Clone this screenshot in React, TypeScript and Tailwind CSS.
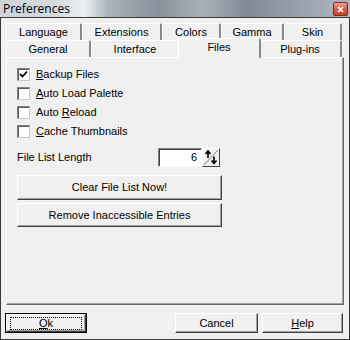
import React from "react";

const font = "font-['Liberation_Sans',Arial,sans-serif]";

const Tab = ({ label, w }: { label: string; w: string }) => (
  <div
    className={`${w} h-[17px] flex items-center justify-center border-t border-l border-white border-r-2 border-r-[#8a8a8a] rounded-tl-[2px] rounded-tr-[2px] bg-[#f0f0f0] text-black`}
  >
    {label}
  </div>
);

const Check = ({ checked }: { checked?: boolean }) => (
  <div className="w-[13px] h-[13px] bg-white border border-t-[#808080] border-l-[#808080] border-r-[#c8c8c8] border-b-[#c8c8c8] shadow-[inset_1px_1px_0_#5a5a5a] flex items-center justify-center">
    {checked && (
      <svg width="9" height="9" viewBox="0 0 9 9">
        <path d="M1 4 L3.5 6.5 L8 1.5" fill="none" stroke="#000" strokeWidth="1.8" />
      </svg>
    )}
  </div>
);

const Btn = ({ children, className = "" }: { children: React.ReactNode; className?: string }) => (
  <div
    className={`flex items-center justify-center bg-[#f0f0f0] border border-t-white border-l-white border-r-[#404040] border-b-[#404040] shadow-[inset_-1px_-1px_0_#a0a0a0] text-black ${className}`}
  >
    {children}
  </div>
);

const Row = ({ checked, children }: { checked?: boolean; children: React.ReactNode }) => (
  <div className="h-[19px] flex items-center gap-[6px]">
    <Check checked={checked} />
    <span>{children}</span>
  </div>
);

export default function App() {
  return (
    <div className={`w-[350px] h-[340px] flex flex-col bg-[#f0f0f0] text-[11px] ${font}`}>
      {/* title bar */}
      <div className="h-[17px] flex items-center justify-between pl-[3px] pr-[2px] bg-[linear-gradient(90deg,#cdd3d8_0%,#d6dce0_17%,#eef1f3_24%,#aab3bb_31%,#87919b_45%,#a9b2ba_58%,#7f8a95_70%,#96a1ab_85%,#aeb8c2_100%)]">
        <span className="text-[12px] text-black font-['Open_Sans',Arial,sans-serif] leading-none">Preferences</span>
        <div className="w-[15px] h-[14px] mt-[1px] rounded-[2px] border border-[#7a2b1e] bg-[linear-gradient(180deg,#f0a090_0%,#d9634c_45%,#c2412b_100%)] flex items-center justify-center">
          <svg width="7" height="7" viewBox="0 0 7 7">
            <path d="M1 1 L6 6 M6 1 L1 6" stroke="#fff" strokeWidth="1.7" />
          </svg>
        </div>
      </div>

      {/* body */}
      <div className="flex-1 flex flex-col border border-[#3a3a3a] pl-[5px] pr-[4px] pt-[5px]">
        {/* tabs */}
        <div className="w-[336px]">
          <div className="flex h-[17px]">
            <Tab label="Language" w="w-[76px]" />
            <Tab label="Extensions" w="w-[80px]" />
            <Tab label="Colors" w="w-[59px]" />
            <Tab label="Gamma" w="w-[63px]" />
            <Tab label="Skin" w="w-[58px]" />
          </div>
          <div className="flex h-[17px] items-start">
            <Tab label="General" w="w-[85px]" />
            <Tab label="Interface" w="w-[89px]" />
            <div className="relative z-10 w-[83px] h-[20px] -mt-[2px] -mx-[2px] pb-[3px] flex items-center justify-center border-t border-l border-white border-r-2 border-r-[#8a8a8a] rounded-tl-[2px] rounded-tr-[2px] bg-[#f0f0f0] text-black">
              Files
            </div>
            <Tab label="Plug-ins" w="w-[83px]" />
          </div>
        </div>

        {/* panel */}
        <div className="h-[248px] w-[338px] border border-t-white border-l-white border-r-[#696969] border-b-[#696969] shadow-[inset_-1px_-1px_0_#a0a0a0] pl-[10px] pt-[7px] text-black">
          <div className="flex flex-col">
            <Row checked>
              <span className="underline">B</span>ackup Files
            </Row>
            <Row>
              <span className="underline">A</span>uto Load Palette
            </Row>
            <Row>
              Auto <span className="underline">R</span>eload
            </Row>
            <Row>
              <span className="underline">C</span>ache Thumbnails
            </Row>
          </div>

          <div className="mt-[7px] flex items-center h-[19px]">
            <span className="w-[141px]">File List Length</span>
            <div className="flex h-[19px]">
              <div className="w-[44px] h-[19px] bg-white border border-t-[#808080] border-l-[#808080] border-r-white border-b-white shadow-[inset_1px_1px_0_#404040] flex items-center justify-end pr-[4px]">
                6
              </div>
              <div className="w-[18px] h-[19px] bg-[#f0f0f0] border border-t-white border-l-white border-r-[#404040] border-b-[#404040]">
                <svg width="16" height="17" viewBox="0 0 16 17">
                  <path d="M1 16 L15 1" stroke="#808080" strokeWidth="1" />
                  <path d="M5 9 V2.5 M2.5 5 L5 2 L7.5 5" fill="none" stroke="#000" strokeWidth="1.6" />
                  <path d="M11 7.5 V14 M8.5 11.5 L11 14.5 L13.5 11.5" fill="none" stroke="#000" strokeWidth="1.6" />
                </svg>
              </div>
            </div>
          </div>

          <div className="mt-[8px] flex flex-col gap-[3px] w-[205px]">
            <Btn className="h-[25px]">Clear File List Now!</Btn>
            <Btn className="h-[24px]">Remove Inaccessible Entries</Btn>
          </div>
        </div>

        {/* bottom buttons */}
        <div className="mt-[8px] flex items-center h-[20px] -ml-[1px]">
          <div className="w-[82px] h-[20px] border border-black">
            <Btn className="w-full h-full">
              <span className="w-[72px] h-[13px] border border-dotted border-black flex items-center justify-center">
                <span className="underline">O</span>k
              </span>
            </Btn>
          </div>
          <Btn className="ml-[88px] w-[83px] h-[20px]">Cancel</Btn>
          <Btn className="ml-[4px] w-[81px] h-[20px]">
            <span>
              <span className="underline">H</span>elp
            </span>
          </Btn>
        </div>
      </div>
    </div>
  );
}
